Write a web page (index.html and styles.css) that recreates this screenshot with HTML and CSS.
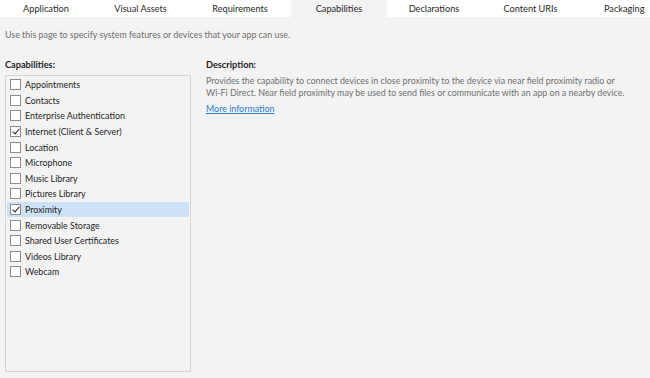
FILE: index.html
```html
<!DOCTYPE html>
<html lang="en">
<head>
<meta charset="UTF-8">
<title>Package.appxmanifest - Capabilities</title>
<link rel="stylesheet" href="styles.css">
</head>
<body>
<nav class="tabs">
  <a class="tab">Application</a>
  <a class="tab">Visual Assets</a>
  <a class="tab">Requirements</a>
  <a class="tab active">Capabilities</a>
  <a class="tab">Declarations</a>
  <a class="tab">Content URIs</a>
  <a class="tab">Packaging</a>
</nav>

<main class="page">
  <p class="intro">Use this page to specify system features or devices that your app can use.</p>

  <div class="columns">
    <section class="caps">
      <h2>Capabilities:</h2>
      <ul class="cap-list">
        <li><span class="box"></span>Appointments</li>
        <li><span class="box"></span>Contacts</li>
        <li><span class="box"></span>Enterprise Authentication</li>
        <li><span class="box checked"></span>Internet (Client &amp; Server)</li>
        <li><span class="box"></span>Location</li>
        <li><span class="box"></span>Microphone</li>
        <li><span class="box"></span>Music Library</li>
        <li><span class="box"></span>Pictures Library</li>
        <li class="selected"><span class="box checked"></span>Proximity</li>
        <li><span class="box"></span>Removable Storage</li>
        <li><span class="box"></span>Shared User Certificates</li>
        <li><span class="box"></span>Videos Library</li>
        <li><span class="box"></span>Webcam</li>
      </ul>
    </section>

    <section class="desc">
      <h2>Description:</h2>
      <p>Provides the capability to connect devices in close proximity to the device via near field proximity radio or Wi&#8209;Fi Direct. Near field proximity may be used to send files or communicate with an app on a nearby device.</p>
      <a href="#" class="more">More information</a>
    </section>
  </div>
</main>
</body>
</html>
```

FILE: styles.css
```css
* { margin:0; padding:0; box-sizing:border-box; }
body { font-family:'Lato','Open Sans',sans-serif; font-size:8.9px; background:#f3f3f3; color:#1e1e1e; width:650px; height:378px; overflow:hidden; }

/* TABS */
.tabs { display:grid; grid-template-columns:92px 97px 102px 96px 94px 99px 1fr; background:#fff; height:17px; font-size:9.2px; }
.tab { text-align:center; line-height:17px; color:#2a2a2a; white-space:nowrap; }
.tab:last-child { text-align:left; padding-left:24px; }
.tab.active { background:#f3f3f3; }

/* PAGE */
.page { padding:0 5px; }
.intro { color:#6e6e6e; margin-top:12px; line-height:12px; }
.columns { display:flex; margin-top:18px; }
h2 { font-size:9.2px; font-weight:700; color:#1e1e1e; line-height:12px; }

.caps { width:186px; }
.cap-list { list-style:none; margin-top:4px; border:1px solid #d4d4d4; height:297px; padding:1px; }
.cap-list li { display:flex; align-items:center; height:15.6px; padding-left:3px; color:#1e1e1e; }
.cap-list li.selected { background:#cde2f6; }
.box { width:11px; height:11px; border:1px solid #8e8e8e; background:#fff; margin-right:4px; position:relative; flex:none; }
.box.checked::after { content:""; position:absolute; left:3px; top:0; width:3px; height:6px; border:solid #1e1e1e; border-width:0 1.6px 1.6px 0; transform:rotate(40deg); }

.desc { margin-left:15px; width:424px; }
.desc p { color:#707070; margin-top:4px; line-height:11.6px; }
.more { display:inline-block; margin-top:5px; color:#2c7cd0; text-decoration:underline; }
```
